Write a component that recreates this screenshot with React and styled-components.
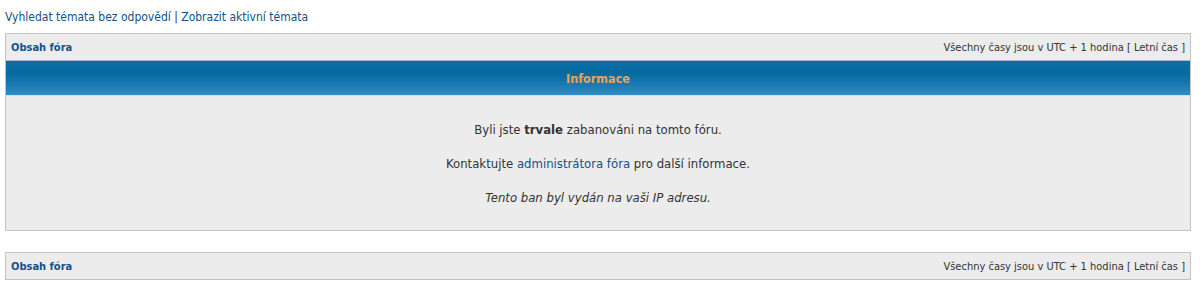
import React from "react";
import styled, { createGlobalStyle } from "styled-components";

const Global = createGlobalStyle`
  body {
    margin: 0;
    background: #ffffff;
    font-family: "DejaVu Sans Condensed", "DejaVu Sans", sans-serif;
    font-size: 12px;
    color: #333333;
  }
`;

const Page = styled.div`
  padding: 9px 9px 0 5px;
  display: flex;
  flex-direction: column;
`;

const TopLinks = styled.div`
  font-size: 12px;
  line-height: 16px;
  color: #333;
  margin-bottom: 8px;
`;

const Link = styled.a`
  color: #105289;
  text-decoration: none;
`;

const Box = styled.div`
  border: 1px solid #c3c3c3;
  background: #ececec;
  margin-bottom: ${(p) => p.$mb || 0}px;
`;

const NavBar = styled.div`
  display: flex;
  justify-content: space-between;
  align-items: center;
  height: 26px;
  padding: 0 5px;
  background: #ececec;
  font-size: 11px;
`;

const NavTitle = styled.a`
  color: #105289;
  font-weight: bold;
  text-decoration: none;
`;

const NavTime = styled.span`
  color: #333;
`;

const Header = styled.div`
  height: 34px;
  display: flex;
  align-items: center;
  justify-content: center;
  border-top: 1px solid #a7b8c4;
  background: linear-gradient(to bottom, #0d6fa5 0%, #06699f 35%, #1a7ab1 70%, #2f8dc3 100%);
  color: #e8a35d;
  font-weight: bold;
  font-size: 12.5px;
`;

const Content = styled.div`
  padding: 25px 10px 24px;
  display: flex;
  flex-direction: column;
  align-items: center;
  gap: 17px;
  font-size: 13px;
  line-height: 17px;
  color: #333;
  border-top: 1px solid #dcdcdc;
`;

const Line = styled.p`
  margin: 0;
  font-style: ${(p) => (p.$italic ? "italic" : "normal")};
`;

export default function App() {
  return (
    <>
      <Global />
      <Page>
        <TopLinks>
          <Link href="#">Vyhledat témata bez odpovědí</Link> |{" "}
          <Link href="#">Zobrazit aktivní témata</Link>
        </TopLinks>
        <Box $mb={21}>
          <NavBar>
            <NavTitle href="#">Obsah fóra</NavTitle>
            <NavTime>Všechny časy jsou v UTC + 1 hodina [ Letní čas ]</NavTime>
          </NavBar>
          <Header>Informace</Header>
          <Content>
            <Line>
              Byli jste <b>trvale</b> zabanováni na tomto fóru.
            </Line>
            <Line>
              Kontaktujte <Link href="#">administrátora fóra</Link> pro další informace.
            </Line>
            <Line $italic>Tento ban byl vydán na vaši IP adresu.</Line>
          </Content>
        </Box>
        <Box>
          <NavBar>
            <NavTitle href="#">Obsah fóra</NavTitle>
            <NavTime>Všechny časy jsou v UTC + 1 hodina [ Letní čas ]</NavTime>
          </NavBar>
        </Box>
      </Page>
    </>
  );
}
